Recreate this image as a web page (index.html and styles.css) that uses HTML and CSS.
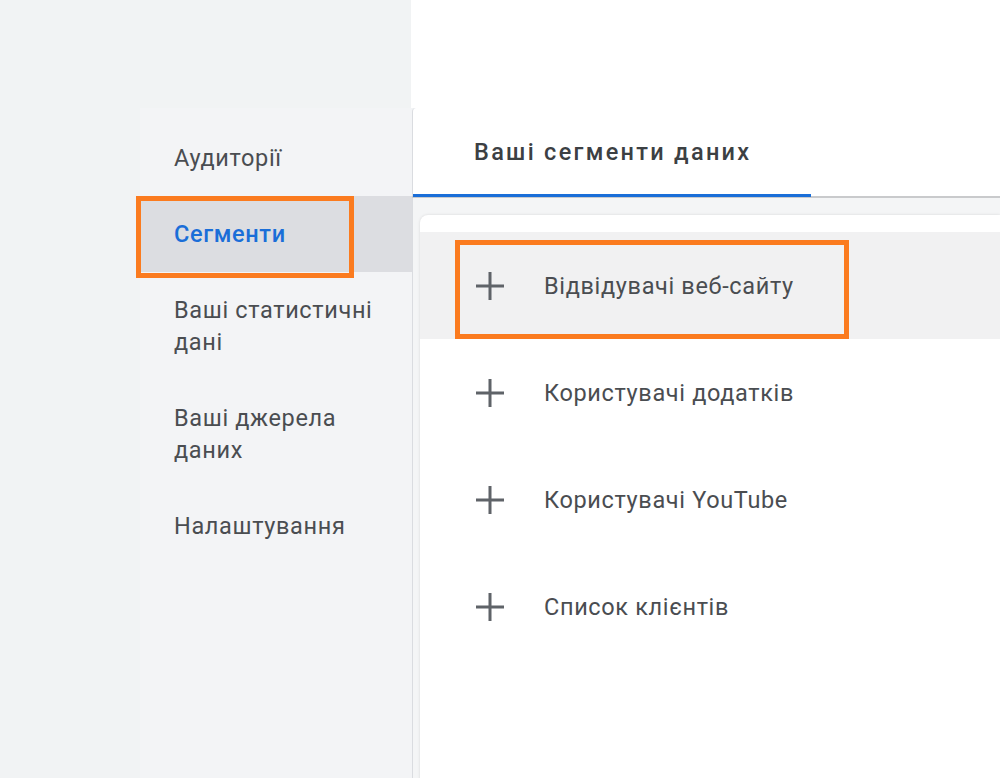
FILE: index.html
```html
<!DOCTYPE html>
<html lang="uk">
<head>
<meta charset="utf-8">
<title>Сегменти</title>
<link rel="stylesheet" href="styles.css">
</head>
<body>
<div class="page">
  <aside class="sidebar">
    <nav class="nav">
      <div class="nav-item">Аудиторії</div>
      <div class="nav-item active">Сегменти<span class="mark mark-nav"></span></div>
      <div class="nav-item">Ваші статистичні дані</div>
      <div class="nav-item">Ваші джерела даних</div>
      <div class="nav-item">Налаштування</div>
    </nav>
  </aside>
  <main class="main">
    <div class="topspace"></div>
    <div class="tabbar">
      <div class="tab">Ваші сегменти даних</div>
    </div>
    <div class="content">
      <div class="card">
        <div class="row hover">
          <svg class="plus" viewBox="0 0 30 30"><path d="M15 1v28M1 15h28"/></svg>
          <span class="label">Відвідувачі веб-сайту</span>
          <span class="mark mark-row"></span>
        </div>
        <div class="row">
          <svg class="plus" viewBox="0 0 30 30"><path d="M15 1v28M1 15h28"/></svg>
          <span class="label">Користувачі додатків</span>
        </div>
        <div class="row">
          <svg class="plus" viewBox="0 0 30 30"><path d="M15 1v28M1 15h28"/></svg>
          <span class="label">Користувачі YouTube</span>
        </div>
        <div class="row">
          <svg class="plus" viewBox="0 0 30 30"><path d="M15 1v28M1 15h28"/></svg>
          <span class="label">Список клієнтів</span>
        </div>
      </div>
    </div>
  </main>
</div>
</body>
</html>
```
FILE: styles.css
```css
html, body {
  margin: 0;
  padding: 0;
}
body {
  background: #f1f3f4;
  font-family: Roboto, "Liberation Sans", Arial, sans-serif;
  color: #3c4043;
  width: 1000px;
  height: 778px;
  overflow: hidden;
}
.page {
  display: flex;
  height: 778px;
}
.sidebar {
  width: 412px;
  flex: none;
  background: #f1f3f4;
}
.nav {
  margin-left: 140px;
  margin-top: 108px;
  padding-top: 12px;
  background: #f3f4f6;
  height: 670px;
  box-sizing: border-box;
}
.nav-item {
  position: relative;
  padding: 22px 34px 22px 34px;
  font-size: 23.5px;
  line-height: 32px;
  color: #4a4d51;
  letter-spacing: 0.65px;
}
.nav-item.active {
  background: #dcdde1;
  color: #1a6ed8;
  font-weight: 500;
}
.mark {
  position: absolute;
  border: 5px solid #fb7b1f;
  box-sizing: border-box;
  pointer-events: none;
}
.mark-nav {
  left: -4px;
  top: 0;
  width: 218px;
  height: 82px;
}
.main {
  flex: 1;
  display: flex;
  flex-direction: column;
  min-width: 0;
}
.topspace {
  height: 108px;
  background: #ffffff;
  margin-left: -1px;
}
.tabbar {
  background: #ffffff;
  height: 88px;
  border-left: 1px solid #dadce0;
  border-top-left-radius: 4px;
  display: flex;
  align-items: flex-end;
  box-shadow: 0 2px 0 #c9cacc;
  position: relative;
  z-index: 1;
}
.tab {
  width: 337px;
  height: 84px;
  padding-left: 61px;
  border-bottom: 3px solid #1a6ed8;
  display: flex;
  align-items: center;
  font-size: 23.5px;
  font-weight: 500;
  letter-spacing: 2.3px;
  color: #3c4043;
  box-sizing: content-box;
  margin-bottom: -1px;
  white-space: nowrap;
}
.content {
  flex: 1;
  background: #f4f5f6;
  border-left: 1px solid #dadce0;
  padding: 19px 0 0 7px;
}
.card {
  background: #ffffff;
  border-top-left-radius: 8px;
  height: 100%;
  padding-top: 17px;
  box-shadow: 0 0 3px rgba(0, 0, 0, 0.12);
}
.row {
  position: relative;
  height: 107px;
  display: flex;
  align-items: center;
  padding-left: 55px;
}
.row.hover {
  background: #f1f1f2;
}
.plus {
  width: 30px;
  height: 30px;
  flex: none;
  fill: none;
  stroke: #5f6368;
  stroke-width: 3;
}
.label {
  margin-left: 39px;
  font-size: 23.5px;
  color: #4a4d51;
  letter-spacing: 0.65px;
}
.mark-row {
  left: 35px;
  top: 8px;
  width: 394px;
  height: 99px;
}
```
